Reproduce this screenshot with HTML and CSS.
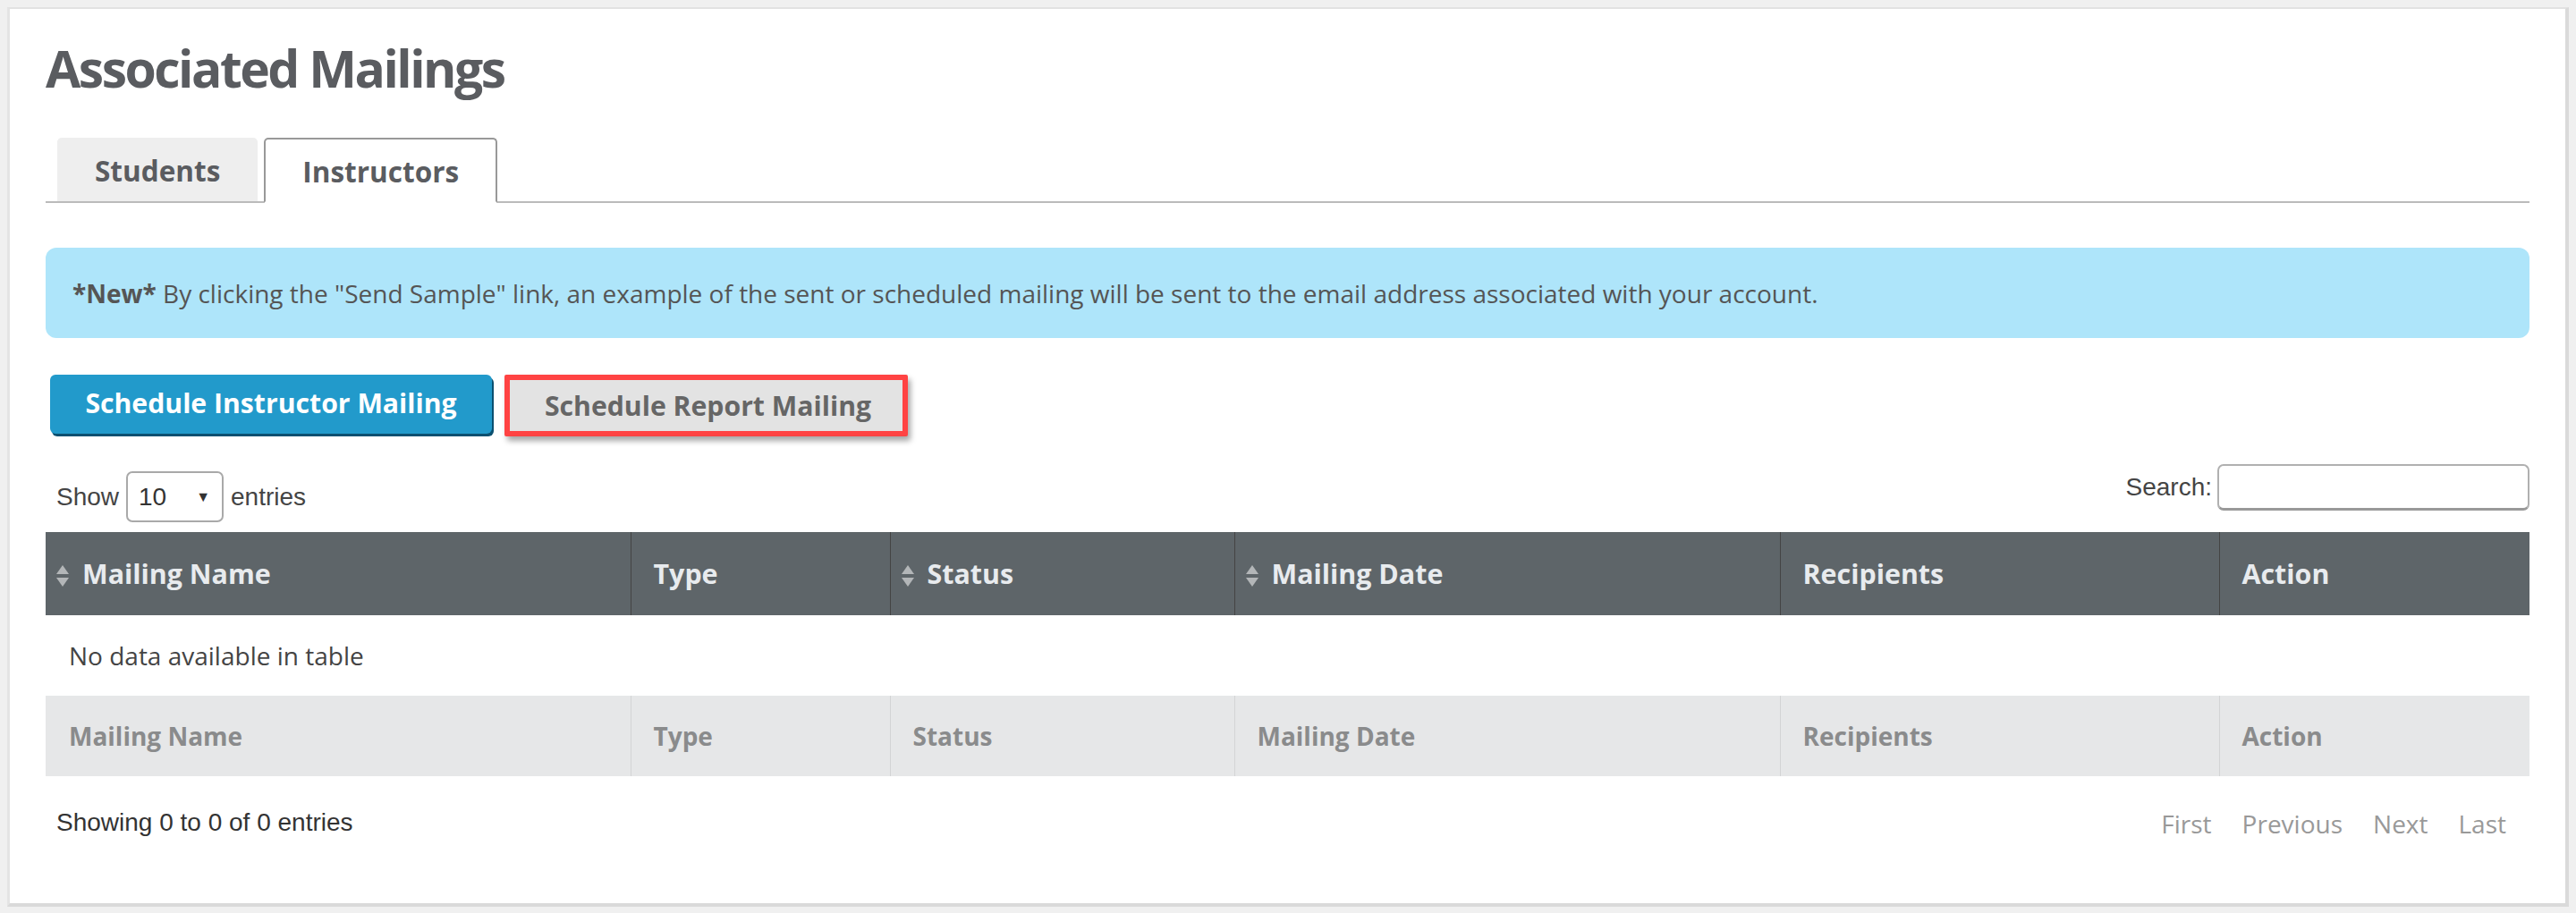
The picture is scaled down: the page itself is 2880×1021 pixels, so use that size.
FILE: index.html
```html
<!DOCTYPE html>
<html>
<head>
<meta charset="utf-8">
<title>Associated Mailings</title>
<link rel="stylesheet" href="styles.css">
</head>
<body>
<div class="panel">
  <h1 class="title">Associated Mailings</h1>
  <ul class="tabs">
    <li class="tab">Students</li>
    <li class="tab tab-active">Instructors</li>
  </ul>
  <div class="alert"><b>*New*</b> By clicking the "Send Sample" link, an example of the sent or scheduled mailing will be sent to the email address associated with your account.</div>
  <div class="actions">
    <button class="btn btn-primary">Schedule Instructor Mailing</button>
    <button class="btn btn-secondary">Schedule Report Mailing</button>
  </div>
  <div class="controls">
    <div class="length">
      <span>Show</span>
      <span class="select"><span class="select-val">10</span><span class="select-arrow">&#9660;</span></span>
      <span>entries</span>
    </div>
    <div class="search">
      <span>Search:</span>
      <span class="search-input"></span>
    </div>
  </div>
  <table class="grid">
    <colgroup>
      <col class="c1"><col class="c2"><col class="c3"><col class="c4"><col class="c5"><col class="c6">
    </colgroup>
    <thead>
      <tr>
        <th class="sortable"><svg class="sort" viewBox="0 0 16 26" width="16" height="26"><path d="M8 1 L15 11 L1 11 Z"/><path d="M1 15 L15 15 L8 25 Z"/></svg>Mailing Name</th>
        <th>Type</th>
        <th class="sortable"><svg class="sort" viewBox="0 0 16 26" width="16" height="26"><path d="M8 1 L15 11 L1 11 Z"/><path d="M1 15 L15 15 L8 25 Z"/></svg>Status</th>
        <th class="sortable"><svg class="sort" viewBox="0 0 16 26" width="16" height="26"><path d="M8 1 L15 11 L1 11 Z"/><path d="M1 15 L15 15 L8 25 Z"/></svg>Mailing Date</th>
        <th>Recipients</th>
        <th>Action</th>
      </tr>
    </thead>
    <tbody>
      <tr><td class="empty" colspan="6">No data available in table</td></tr>
    </tbody>
    <tfoot>
      <tr>
        <th>Mailing Name</th>
        <th>Type</th>
        <th>Status</th>
        <th>Mailing Date</th>
        <th>Recipients</th>
        <th>Action</th>
      </tr>
    </tfoot>
  </table>
  <div class="info-row">
    <div class="info">Showing 0 to 0 of 0 entries</div>
    <div class="pager">
      <span class="page">First</span>
      <span class="page">Previous</span>
      <span class="page">Next</span>
      <span class="page">Last</span>
    </div>
  </div>
</div>
</body>
</html>
```

FILE: styles.css
```css
html, body {
  margin: 0;
  padding: 0;
}
body {
  background: #f0f0f0;
  font-family: "Open Sans", "Liberation Sans", sans-serif;
  color: #555;
}
.panel {
  margin: 8px 8px 6px 8px;
  background: #fff;
  border-top: 2px solid #e2e2e2;
  border-left: 3px solid #e4e4e4;
  border-right: 4px solid #dadada;
  border-bottom: 4px solid #dadada;
  padding: 34px 40px 72px 40px;
}
.title {
  margin: 0;
  font-size: 57px;
  line-height: 64px;
  font-weight: 700;
  color: #5a5c60;
  letter-spacing: -2.5px;
}
.tabs {
  list-style: none;
  margin: 46px 0 0 0;
  padding: 0 0 0 13px;
  display: flex;
  gap: 7px;
  border-bottom: 2px solid #bbbbbb;
}
.tab {
  height: 73px;
  box-sizing: border-box;
  padding: 1px 42px 0 42px;
  font-size: 31.5px;
  line-height: 72px;
  font-weight: 700;
  color: #5a5c60;
  background: #eeeeee;
  border-radius: 5px 5px 0 0;
  margin-bottom: -2px;
  border-bottom: 2px solid #bbbbbb;
}
.tab-active {
  background: #fff;
  border: 2px solid #999;
  border-bottom: 2px solid #fff;
  padding: 0 41px 0 41px;
}
.alert {
  margin-top: 50px;
  background: #aee5fa;
  border-radius: 12px;
  padding: 31px 30px 30px 30px;
  font-size: 28px;
  line-height: 40px;
  color: #555;
}
.alert b {
  font-weight: 700;
}
.actions {
  margin-top: 41px;
  display: flex;
  gap: 14px;
  padding-left: 5px;
}
.btn {
  font-family: "Open Sans", sans-serif;
  font-size: 30.2px;
  font-weight: 700;
  height: 69px;
  box-sizing: border-box;
  margin: 0;
  cursor: pointer;
}
.btn-primary {
  width: 494px;
  background: #229acb;
  color: #fff;
  border: 0;
  border-radius: 6px;
  box-shadow: 2px 3px 0 #0b5070;
  height: 66px;
  line-height: 64px;
  padding: 0 0 2px 0;
}
.btn-secondary {
  width: 451px;
  background: #e3e3e3;
  color: #666;
  border: 6px solid #ff4343;
  border-radius: 2px;
  box-shadow: 3px 5px 6px rgba(0, 0, 0, 0.35);
  line-height: 56px;
  padding: 0 0 0 4px;
}
.controls {
  display: flex;
  justify-content: space-between;
  align-items: flex-start;
  margin-top: 31px;
  font-family: "Liberation Sans", Arial, sans-serif;
  font-size: 28px;
  color: #444;
}
.length {
  margin-top: 8px;
  display: flex;
  align-items: center;
  gap: 8px;
  padding-left: 12px;
  height: 57px;
}
.length-text {
  padding-top: 4px;
}
.select {
  width: 109px;
  height: 57px;
  box-sizing: border-box;
  border: 2px solid #a9a9a9;
  border-radius: 7px;
  display: flex;
  align-items: center;
  justify-content: space-between;
  padding: 0 13px 0 12px;
  color: #333;
}
.select-arrow {
  font-size: 16px;
  color: #333;
}
.search {
  display: flex;
  align-items: center;
  gap: 6px;
  height: 52px;
}
.search-input {
  width: 349px;
  height: 52px;
  box-sizing: border-box;
  border: 2px solid #b0b0b0;
  border-bottom: 3px solid #999;
  border-radius: 7px;
  background: #fff;
}
.grid {
  margin-top: 11px;
  width: 100%;
  border-collapse: collapse;
  table-layout: fixed;
}
.c1 { width: 654px; }
.c2 { width: 290px; }
.c3 { width: 385px; }
.c4 { width: 610px; }
.c5 { width: 491px; }
.grid thead th {
  height: 93px;
  background: #5e6569;
  color: #e8ebee;
  font-size: 30.4px;
  font-weight: 700;
  text-align: left;
  padding: 0 0 0 25px;
  border-left: 1px solid #444;
  white-space: nowrap;
}
.grid thead th:first-child {
  border-left: 0;
}
.grid thead th.sortable {
  padding-left: 11px;
}
.sort {
  fill: #b3b6b8;
  vertical-align: -4px;
  margin-right: 14px;
}
.grid td.empty {
  height: 90px;
  padding: 0 0 0 26px;
  font-size: 28px;
  color: #444;
}
.grid tfoot th {
  height: 90px;
  background: #e6e7e8;
  color: #8a8b8c;
  font-size: 28px;
  font-weight: 700;
  text-align: left;
  padding: 0 0 0 25px;
  border-left: 1px solid #d3d4d5;
}
.grid tfoot th:first-child {
  border-left: 0;
  padding-left: 26px;
}
.info-row {
  display: flex;
  justify-content: space-between;
  align-items: center;
  margin-top: 34px;
  height: 36px;
}
.info {
  font-family: "Liberation Sans", Arial, sans-serif;
  font-size: 28px;
  color: #333;
  padding-left: 12px;
}
.pager {
  display: flex;
  padding-right: 9px;
  padding-top: 2px;
  font-size: 28px;
  color: #999;
}
.page {
  padding: 0 17px;
}
```
